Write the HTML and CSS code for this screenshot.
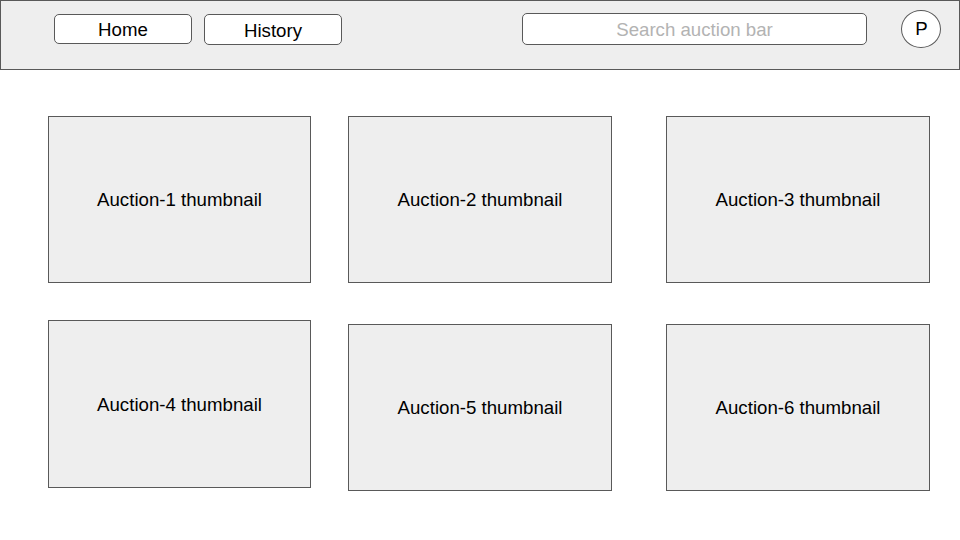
FILE: index.html
```html
<!DOCTYPE html>
<html>
<head>
<meta charset="utf-8">
<link rel="stylesheet" href="styles.css">
</head>
<body>
<header class="topbar">
  <nav class="nav">
    <button class="nav-btn">Home</button>
    <button class="nav-btn nav-btn-history">History</button>
  </nav>
  <div class="search">Search auction bar</div>
  <div class="avatar">P</div>
</header>
<main class="grid">
  <div class="card card-first">Auction-1 thumbnail</div>
  <div class="card">Auction-2 thumbnail</div>
  <div class="card card-far">Auction-3 thumbnail</div>
  <div class="card card-first card-tall">Auction-4 thumbnail</div>
  <div class="card card-low">Auction-5 thumbnail</div>
  <div class="card card-low card-far">Auction-6 thumbnail</div>
</main>
</body>
</html>
```
FILE: styles.css
```css
* { box-sizing: border-box; }
html, body { margin: 0; padding: 0; background: #fff; }
body {
  width: 960px;
  height: 540px;
  overflow: hidden;
  font-family: "Liberation Sans", Arial, sans-serif;
  color: #000;
}
.topbar {
  height: 70px;
  width: 960px;
  background: #eeeeee;
  border: 1px solid #595959;
  display: flex;
  align-items: flex-start;
  padding: 13px 0 0 53px;
}
.nav { display: flex; gap: 12px; }
.nav-btn {
  width: 138px;
  height: 30px;
  background: #fff;
  border: 1px solid #595959;
  border-radius: 5px;
  font-family: inherit;
  font-size: 18.67px;
  color: #000;
  padding: 1px 0 0;
  line-height: 28px;
}
.nav-btn-history { height: 31px; line-height: 30px; }
.search {
  margin-left: 180px;
  margin-top: -1px;
  width: 345px;
  height: 32px;
  background: #fff;
  border: 1px solid #595959;
  border-radius: 5px;
  color: #b3b3b3;
  font-size: 18.67px;
  text-align: center;
  line-height: 30px;
  padding-top: 1px;
}
.avatar {
  margin-left: 34px;
  margin-top: -4px;
  width: 40px;
  height: 38px;
  border-radius: 50%;
  background: #fff;
  border: 1px solid #595959;
  font-size: 18.67px;
  text-align: center;
  line-height: 36px;
  padding-left: 1px;
}
.grid {
  display: grid;
  grid-template-columns: 263px 264px 264px;
  column-gap: 37px;
  row-gap: 37px;
  padding: 46px 0 0 48px;
  grid-template-rows: 167px 167px;
  align-items: start;
}
.card {
  width: 264px;
  height: 167px;
  background: #eeeeee;
  border: 1px solid #595959;
  display: flex;
  align-items: center;
  justify-content: center;
  font-size: 18.67px;
  padding-top: 1px;
}
.card-first { width: 263px; }
.card-tall { height: 168px; }
.card-far { margin-left: 17px; }
.card-low { margin-top: 4px; }
```
